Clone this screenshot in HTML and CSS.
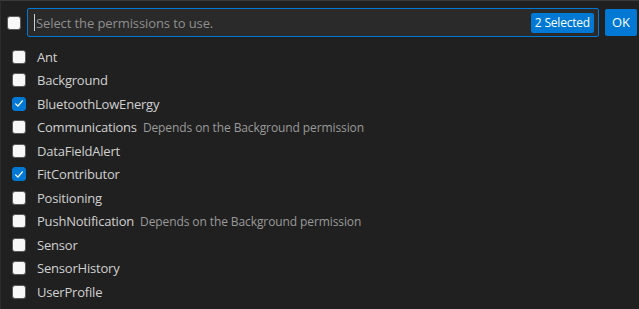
FILE: index.html
```html
<!DOCTYPE html>
<html lang="en">
<head>
  <meta charset="UTF-8" />
  <title>Permissions</title>
  <link rel="stylesheet" href="styles.css">
</head>
<body>
  <div class="quick-input">
    <div class="header">
      <span class="check"></span>
      <div class="filter">
        <span class="caret"></span>
        <span class="placeholder">Select the permissions to use.</span>
        <span class="badge">2 Selected</span>
      </div>
      <button class="ok">OK</button>
    </div>

    <ul class="list">
      <li><span class="check"></span><span class="label">Ant</span></li>
      <li><span class="check"></span><span class="label">Background</span></li>
      <li><span class="check on"><svg viewBox="0 0 16 16"><path d="M3.5 8.5l3 3 6-7" fill="none" stroke="#fff" stroke-width="1.8" stroke-linecap="round" stroke-linejoin="round"/></svg></span><span class="label">BluetoothLowEnergy</span></li>
      <li><span class="check"></span><span class="label">Communications</span><span class="desc">Depends on the Background permission</span></li>
      <li><span class="check"></span><span class="label">DataFieldAlert</span></li>
      <li><span class="check on"><svg viewBox="0 0 16 16"><path d="M3.5 8.5l3 3 6-7" fill="none" stroke="#fff" stroke-width="1.8" stroke-linecap="round" stroke-linejoin="round"/></svg></span><span class="label">FitContributor</span></li>
      <li><span class="check"></span><span class="label">Positioning</span></li>
      <li><span class="check"></span><span class="label">PushNotification</span><span class="desc">Depends on the Background permission</span></li>
      <li><span class="check"></span><span class="label">Sensor</span></li>
      <li><span class="check"></span><span class="label">SensorHistory</span></li>
      <li><span class="check"></span><span class="label">UserProfile</span></li>
    </ul>
  </div>
</body>
</html>
```

FILE: styles.css
```css
:root {
  --bg: #202020;
  --input-bg: #2a2a2a;
  --blue: #0078d4;
  --text: #d0d0d0;
  --muted: #9a9a9a;
}
*, *::before, *::after { box-sizing: border-box; }
html, body {
  margin: 0; padding: 0; height: 100%;
  background: var(--bg); color: var(--text);
  font-family: 'Open Sans', 'Noto Sans', sans-serif; font-size: 13px;
  overflow: hidden;
}
.quick-input {
  height: 100%;
  border-top: 1px solid #3a3a3a;
  border-left: 1px solid #2c2c2c;
}

.header {
  display: flex; align-items: center; gap: 6px;
  padding: 7px 2px 0 6px;
}
.filter {
  flex: 1; height: 29px;
  display: flex; align-items: center;
  background: var(--input-bg);
  border: 1px solid var(--blue); border-radius: 2px;
  padding: 0 4px 0 6px;
}
.caret { width: 1px; height: 17px; background: #cfcfcf; margin-right: 1px; }
.placeholder { flex: 1; color: #8f8f8f; letter-spacing: -0.1px; }
.badge {
  background: var(--blue); color: #fff;
  font-size: 12px; line-height: 20px; height: 20px;
  padding: 0 4px; border-radius: 2px; letter-spacing: -0.2px;
}
.ok {
  height: 27px; width: 32px; margin-top: -1px;
  background: var(--blue); color: #fff;
  border: none; border-radius: 2px;
  font: inherit; font-size: 13px; padding: 0;
}

.check {
  flex: none; width: 14px; height: 14px;
  background: #f8f8f8; border: 1px solid #5a5a5a; border-radius: 3px;
  display: inline-flex; align-items: center; justify-content: center;
}
.check.on { background: var(--blue); border-color: var(--blue); }
.check svg { width: 13px; height: 13px; }

.list { list-style: none; margin: 8px 0 0; padding: 0; }
.list li {
  height: 23.5px; display: flex; align-items: center;
  padding-left: 11px;
}
.list .check { margin-right: 11px; }
.label { letter-spacing: -0.2px; }
.desc { color: var(--muted); font-size: 12px; margin-left: 6px; letter-spacing: -0.1px; }
```
